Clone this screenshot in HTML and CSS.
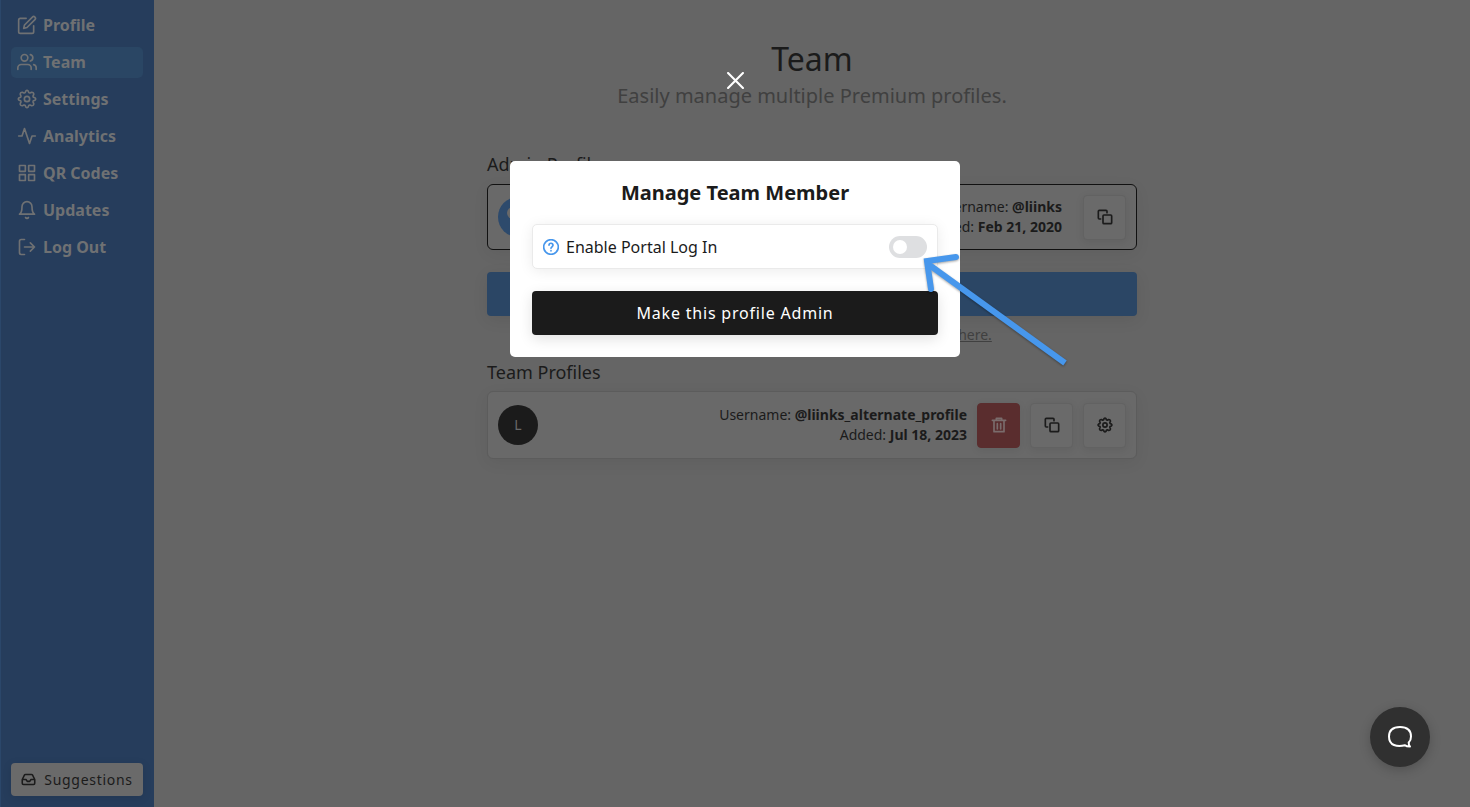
FILE: index.html
```html
<!DOCTYPE html>
<html lang="en">
<head>
<meta charset="utf-8">
<title>Team</title>
<link rel="stylesheet" href="styles.css">
</head>
<body>
<svg class="sprite" aria-hidden="true">
  <symbol id="copy" viewBox="0 0 24 24"><path d="M5.5 15H3.5A1.5 1.5 0 0 1 2 13.500V3.500A1.500 1.500 0 0 1 3.500 2H13.500A1.500 1.500 0 0 1 15 3.500V5.500"/><rect x="9" y="9" width="13" height="13" rx="1.500"/></symbol>
  <symbol id="gear" viewBox="0 0 24 24"><path d="M9.900 4.200 10.600 2.400Q12 .8 13.400 2.400L14.100 4.200Q14.700 5 15.700 4.700L17.500 3.900Q20.300 3.800 20.100 6.500L19.300 8.300Q19 9.300 19.800 9.900L21.600 10.600Q23.200 12 21.600 13.400L19.800 14.100Q19 14.700 19.300 15.700L20.100 17.500Q20.300 20.200 17.500 20.100L15.700 19.300Q14.700 19 14.100 19.800L13.400 21.600Q12 23.200 10.600 21.600L9.900 19.800Q9.300 19 8.300 19.300L6.500 20.100Q3.700 20.200 3.900 17.500L4.700 15.700Q5 14.700 4.200 14.100L2.400 13.400Q.8 12 2.400 10.600L4.200 9.900Q5 9.300 4.700 8.300L3.900 6.500Q3.700 3.800 6.500 3.900L8.300 4.700Q9.300 5 9.900 4.200Z"/><circle cx="12" cy="12" r="3.200"/></symbol>
</svg>
<div class="app">
  <aside class="sidebar">
    <nav class="nav">
      <a class="nav-link" href="#"><svg viewBox="0 0 24 24"><path d="M11 4H4a2 2 0 0 0-2 2v14a2 2 0 0 0 2 2h14a2 2 0 0 0 2-2v-7M18.500 2.500a2.100 2.100 0 0 1 3 3L12 15l-4 1 1-4z"/></svg>Profile</a>
      <a class="nav-link active" href="#" aria-current="page"><svg viewBox="0 0 24 24"><circle cx="9" cy="7" r="4"/><path d="M1 21v-2a4 4 0 0 1 4-4h8a4 4 0 0 1 4 4v2M23 21v-2a4 4 0 0 0-3-3.870M16 3.130a4 4 0 0 1 0 7.750"/></svg>Team</a>
      <a class="nav-link" href="#"><svg viewBox="0 0 24 24"><use href="#gear"/></svg>Settings</a>
      <a class="nav-link" href="#"><svg viewBox="0 0 24 24"><path d="M22 12h-4l-3 9L9 3l-3 9H2"/></svg>Analytics</a>
      <a class="nav-link" href="#"><svg viewBox="0 0 24 24"><path d="M3 3h7v7H3zM14 3h7v7h-7zM14 14h7v7h-7zM3 14h7v7H3z"/></svg>QR Codes</a>
      <a class="nav-link" href="#"><svg viewBox="0 0 24 24"><path d="M18 8A6 6 0 0 0 6 8c0 7-3 9-3 9h18s-3-2-3-9M13.730 21a2 2 0 0 1-3.460 0"/></svg>Updates</a>
      <a class="nav-link" href="#"><svg viewBox="0 0 24 24"><path d="M9 21H5a2 2 0 0 1-2-2V5a2 2 0 0 1 2-2h4M16 17l5-5-5-5M21 12H9"/></svg>Log Out</a>
    </nav>
    <button class="suggestions" type="button"><svg viewBox="0 0 24 24"><path d="M22 12h-6l-2 3h-4l-2-3H2M5.450 5.110 2 12v6a2 2 0 0 0 2 2h16a2 2 0 0 0 2-2v-6l-3.450-6.890A2 2 0 0 0 16.760 4H7.240a2 2 0 0 0-1.790 1.110z"/></svg>Suggestions</button>
  </aside>
  <main class="main">
    <div class="content">
      <h1>Team</h1>
      <p class="subtitle">Easily manage multiple Premium profiles.</p>
      <h2>Admin Profile</h2>
      <section class="card admin">
        <svg class="avatar avatar-blue" viewBox="0 0 40 40" aria-hidden="true"><circle cx="15" cy="16" r="6"/></svg>
        <p class="details">Username: <b>@liinks</b><br>Added: <b>Feb 21, 2020</b></p>
        <button class="tool" type="button" aria-label="Copy"><svg><use href="#copy"/></svg></button>
      </section>
      <button class="add" type="button" aria-label="Add profile"></button>
      <p class="help">Learn more about managing your team's profiles <a href="#">here.</a></p>
      <h2>Team Profiles</h2>
      <section class="card">
        <span class="avatar">L</span>
        <p class="details">Username: <b>@liinks_alternate_profile</b><br>Added: <b>Jul 18, 2023</b></p>
        <button class="tool danger" type="button" aria-label="Delete"><svg viewBox="0 0 24 24"><path d="M2 5h20M8 5V2h8v3M4.500 5v17h15V5M9.500 10v8M14.500 10v8"/></svg></button>
        <button class="tool" type="button" aria-label="Copy"><svg><use href="#copy"/></svg></button>
        <button class="tool" type="button" aria-label="Manage"><svg><use href="#gear"/></svg></button>
      </section>
    </div>
  </main>
</div>
<div class="overlay">
  <button class="close" type="button" aria-label="Close"><svg viewBox="0 0 16 16"><path d="M1 1l14 14M15 1 1 15"/></svg></button>
  <div class="modal" role="dialog" aria-modal="true" aria-labelledby="modal-title">
    <h2 class="modal-title" id="modal-title">Manage Team Member</h2>
    <div class="setting">
      <svg class="question" viewBox="0 0 24 24"><circle cx="12" cy="12" r="11"/><path d="M9 9.200a3 3 0 0 1 6 .3c0 2-3 2.500-3 4.500M12 17.500v.2"/></svg>
      <label for="portal">Enable Portal Log In</label>
      <input class="switch" id="portal" type="checkbox" role="switch">
    </div>
    <button class="primary" type="button">Make this profile Admin</button>
    <svg class="arrow" viewBox="0 0 150 120" aria-hidden="true"><path class="shaft" d="M14 13 151 112"/><path class="head" d="M42 6 13 10 17 38"/></svg>
  </div>
</div>
<button class="chat" type="button" aria-label="Open chat"><svg viewBox="0 0 24 24"><path d="M22 21.600C20.500 21.600 18 21.200 17 20.200C14 21 8.500 21 6 20C2.700 18.700 1 15 1 11.500C1 5 5 2 12 2S23 5 23 11.500C23 14 22.200 16.200 20.700 17.600C20.600 19.200 21.100 20.500 22 21.600Z"/></svg></button>
</body>
</html>
```
FILE: styles.css
```css
* { box-sizing: border-box; }
body {
  margin: 0;
  background: #656565;
  color: #1b1b1b;
  font: 16px/24px "Noto Sans", sans-serif;
}
button { font: inherit; color: inherit; border: 0; margin: 0; padding: 0; }
h1, h2, p { margin: 0; font-weight: 400; }
svg { fill: none; stroke: currentColor; stroke-width: 2; stroke-linecap: round; stroke-linejoin: round; }
.sprite { display: none; }
.app { display: flex; min-height: 100vh; }

.sidebar {
  width: 154px;
  flex: none;
  display: flex;
  flex-direction: column;
  justify-content: space-between;
  padding: 10px 11px 11px 10px;
  background: #263d5c;
  border-left: 1px solid #2b476a;
}
.nav { display: flex; flex-direction: column; gap: 6px; }
.nav-link {
  display: flex;
  align-items: center;
  gap: 6px;
  height: 31px;
  padding: 0 6px 1px;
  border-radius: 5px;
  color: #6f7173;
  font-weight: 700;
  text-decoration: none;
}
.nav-link svg { width: 20px; height: 20px; stroke-width: 2; }
.active { background: #2a4664; }
.suggestions {
  display: flex;
  align-items: center;
  justify-content: center;
  gap: 8px;
  height: 33px;
  border-radius: 4px;
  background: #6a6a6a;
  font-size: 14px;
  letter-spacing: .05em;
  box-shadow: 0 2px 10px rgba(0, 0, 0, .1);
}
.suggestions svg { width: 15px; height: 15px; flex: none; stroke-width: 2.5; }

.main { flex: 1; padding: 38px 20px; }
.content { max-width: 650px; margin: 0 auto; }
h1 { font-size: 32px; line-height: 42px; text-align: center; }
h2 { font-size: 18px; }
.subtitle { margin: 2px 0 42px; font-size: 20px; line-height: 28px; text-align: center; color: #404040; }
.card {
  display: flex;
  align-items: center;
  gap: 10px;
  height: 68px;
  margin-top: 7px;
  padding: 0 10px;
  border: 1px solid #5c5c5c;
  border-radius: 6px;
  background: #696969;
  box-shadow: 0 4px 16px rgba(0, 0, 0, .06);
}
.admin { height: 66px; margin-top: 8px; border-color: #111; }
.admin .tool { margin-left: 11px; }
.avatar {
  width: 40px;
  height: 40px;
  display: grid;
  place-items: center;
  border-radius: 50%;
  background: #1b1b1b;
  color: #696969;
  font-size: 14px;
}
.avatar-blue { background: #2d4a6c; fill: #696969; stroke: none; }
.details { flex: 1; text-align: right; font-size: 14px; line-height: 20px; }
.details b { font-weight: 700; }
.tool {
  display: grid;
  place-items: center;
  width: 43px;
  height: 45px;
  border: 1px solid #626262;
  border-radius: 4px;
  background: #6a6a6a;
  box-shadow: 0 2px 8px rgba(0, 0, 0, .08);
}
.tool svg { width: 16px; height: 16px; stroke-width: 2.5; }
.danger { background: #5a2d2e; border-color: #5a2d2e; color: #7a6c6c; }
.add {
  display: block;
  width: 100%;
  height: 44px;
  margin-top: 22px;
  border-radius: 4px;
  background: #2b4665;
  box-shadow: 0 4px 16px rgba(0, 0, 0, .08);
}
.help { margin: 8px 0 14px; text-align: center; font-size: 14px; line-height: 22px; color: #404040; }
.help a { color: inherit; }

.overlay {
  position: fixed;
  inset: 0;
  display: flex;
  flex-direction: column;
  align-items: center;
  padding: 71px 20px 20px;
}
.close { display: grid; place-items: center; width: 30px; height: 18px; margin-bottom: 72px; background: none; color: #fff; }
.close svg { width: 17px; height: 17px; }
.modal {
  position: relative;
  width: 100%;
  max-width: 450px;
  padding: 18px 22px 22px;
  border-radius: 5px;
  background: #fff;
}
.modal-title { font-size: 20px; line-height: 28px; font-weight: 700; text-align: center; }
.setting {
  display: flex;
  align-items: center;
  gap: 7px;
  height: 45px;
  margin: 17px 0 22px;
  padding: 0 10px;
  border: 1px solid #eaeaea;
  border-radius: 5px;
  background: #fff;
  box-shadow: 0 2px 14px rgba(0, 0, 0, .08);
}
.setting label { flex: 1; }
.question { width: 16px; height: 16px; color: #4797ec; stroke-width: 2.5; }
.switch {
  appearance: none;
  width: 38px;
  height: 22px;
  margin: 0;
  padding: 4px;
  border-radius: 11px;
  background: #dedfe1;
}
.switch::before { content: ""; display: block; width: 14px; height: 14px; border-radius: 50%; background: #fff; }
.primary {
  display: block;
  width: 100%;
  height: 44px;
  border-radius: 4px;
  background: #1b1b1b;
  color: #fff;
  letter-spacing: .05em;
  box-shadow: 0 4px 14px rgba(0, 0, 0, .12);
}
.arrow {
  position: absolute;
  left: 404px;
  top: 90px;
  width: 150px;
  height: 120px;
  overflow: visible;
  color: #4797ec;
  stroke-width: 6;
  filter: drop-shadow(0 1px 1px rgba(0, 0, 0, .35));
}
.shaft { stroke-linecap: butt; }
.head { stroke-linecap: round; stroke-linejoin: miter; }
.chat {
  position: fixed;
  right: 40px;
  bottom: 40px;
  display: grid;
  place-items: center;
  width: 60px;
  height: 60px;
  border-radius: 50%;
  background: #303030;
  color: #fff;
  box-shadow: 0 3px 12px rgba(0, 0, 0, .2);
}
.chat svg { width: 24px; height: 24px; }
```
